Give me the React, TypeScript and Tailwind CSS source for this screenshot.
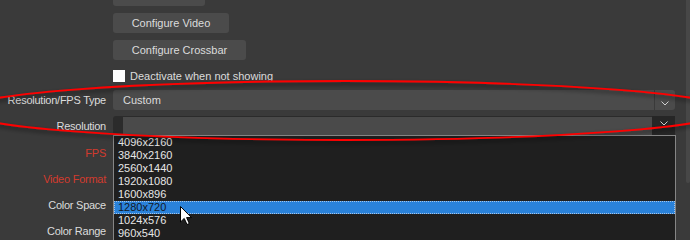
import React from "react";

const Chevron = () => (
  <svg width="8" height="5" viewBox="0 0 8 5" className="block">
    <polyline points="0.5,0.5 4,4 7.5,0.5" fill="none" stroke="#cfcfcf" strokeWidth="1" />
  </svg>
);

const items = ["4096x2160", "3840x2160", "2560x1440", "1920x1080", "1600x896", "1280x720", "1024x576", "960x540", "800x600"];

export default function App() {
  return (
    <div className="relative w-[690px] h-[240px] overflow-hidden bg-[#3a3a3a] font-['Liberation_Sans',Arial,sans-serif] text-[11px] text-[#dcdcdc]">
      <div className="flex">
        <div className="flex-1 -mt-[14px]">
          <div className="flex flex-col gap-[7px] pl-[113px]">
            <div className="w-[92px] h-[20px] rounded-[3px] bg-[#4b4b4b] flex items-center justify-center">Deactivate</div>
            <div className="w-[116px] h-[20px] rounded-[3px] bg-[#4b4b4b] flex items-center justify-center">Configure Video</div>
            <div className="w-[133px] h-[20px] rounded-[3px] bg-[#4b4b4b] flex items-center justify-center">Configure Crossbar</div>
          </div>
          <div className="mt-[10px] pl-[113px] h-[12px] flex items-center gap-[5px]">
            <div className="w-[12px] h-[12px] bg-white" />
            <span>Deactivate when not showing</span>
          </div>
          <div className="mt-[8px] flex items-center gap-[7px] h-[20px]">
            <div className="w-[106px] text-right tracking-[-0.25px]">Resolution/FPS Type</div>
            <div className="w-[562px] h-[20px] rounded-[3px] bg-[#4b4b4b] flex">
              <div className="flex-1 pl-[10px] flex items-center">Custom</div>
              <div className="w-[21px] border-l border-[#3a3a3a] flex items-end justify-center pb-[4px]">
                <Chevron />
              </div>
            </div>
          </div>
          <div className="mt-[6px] flex items-center gap-[7px] h-[20px]">
            <div className="w-[106px] text-right tracking-[-0.25px]">Resolution</div>
            <div className="w-[562px] h-[20px] rounded-[3px] bg-[#2b2b2b] flex">
              <div className="w-[10px]" />
              <div className="flex-1 my-[1px] bg-[#4a4a4a]" />
              <div className="w-[23px] bg-[#262626] flex items-start justify-center pt-[5px]">
                <Chevron />
              </div>
            </div>
          </div>
          <div className="mt-[4px] flex flex-col tracking-[-0.25px]">
            <div className="h-[26px] flex items-center"><div className="w-[106px] text-right text-[#d23a2e]">FPS</div></div>
            <div className="h-[26px] flex items-center"><div className="w-[106px] text-right text-[#d23a2e]">Video Format</div></div>
            <div className="h-[26px] flex items-center"><div className="w-[106px] text-right">Color Space</div></div>
            <div className="h-[26px] flex items-center"><div className="w-[106px] text-right">Color Range</div></div>
          </div>
        </div>
        <div className="w-[5px] pt-0">
          <div className="w-[4px] ml-[1px] h-[183px] rounded-b-[3px] bg-[#474747]" />
        </div>
      </div>

      <div className="absolute left-[113px] top-[135px] w-[563px] h-[120px] bg-[#1f1f1f] border border-[#858585] text-[#e6e6e6]">
        {items.map((it) => (
          <div
            key={it}
            className={
              it === "1280x720"
                ? "h-[13px] leading-[11px] pl-[3px] bg-[#2a82da] border border-dotted border-[#a8c4e4] text-[#111827]"
                : "h-[13px] leading-[13px] pl-[4px]"
            }
          >
            {it}
          </div>
        ))}
      </div>

      <svg className="absolute inset-0 pointer-events-none" width="690" height="240" viewBox="0 0 690 240">
        <defs>
          <filter id="sh" x="-10%" y="-50%" width="120%" height="200%">
            <feDropShadow dx="0" dy="2.5" stdDeviation="2" floodColor="#000" floodOpacity="0.6" />
          </filter>
        </defs>
        <ellipse cx="345" cy="110.5" rx="383" ry="29.5" fill="none" stroke="#ff0000" strokeWidth="1.8" filter="url(#sh)" />
      </svg>

      <svg className="absolute left-[180px] top-[206px] pointer-events-none" width="13" height="20" viewBox="0 0 13 20">
        <polygon points="0.5,0.5 0.5,16 4.2,12.4 7,18.5 9.3,17.5 6.6,11.6 11.5,11.6" fill="#fff" stroke="#000" strokeWidth="1" strokeLinejoin="round" />
      </svg>
    </div>
  );
}
